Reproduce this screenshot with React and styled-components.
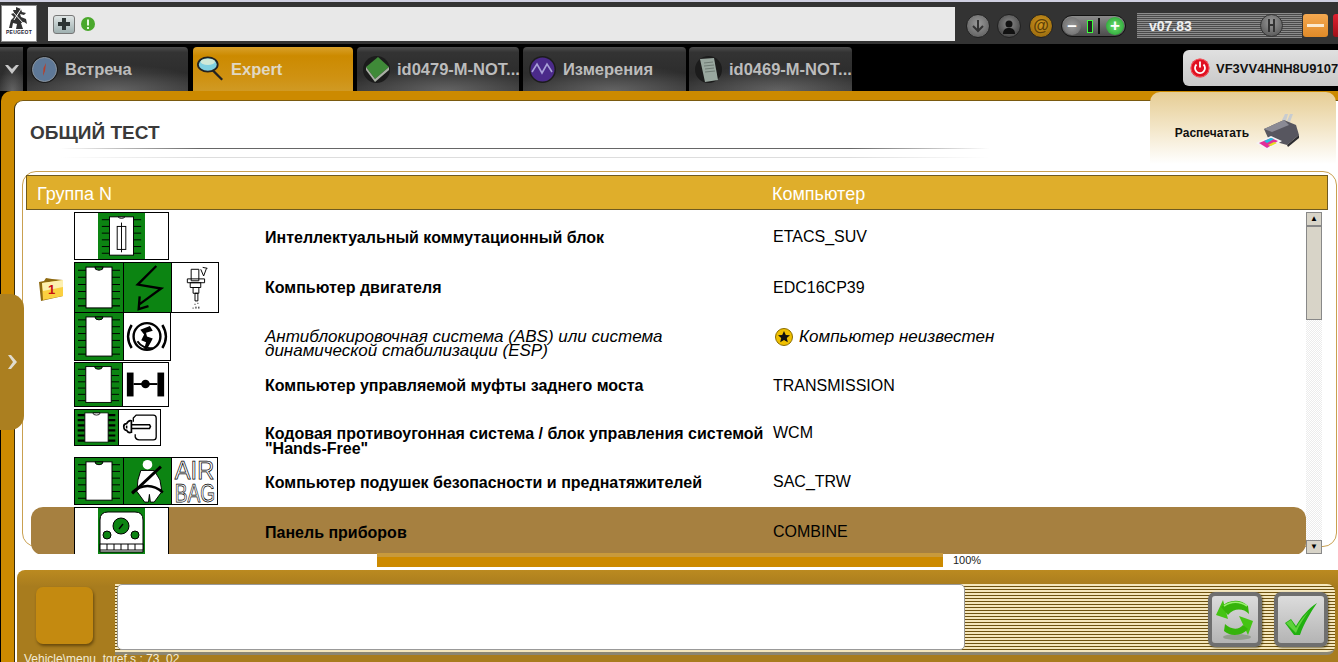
import React from 'react';
import styled, { createGlobalStyle } from 'styled-components';

const GlobalStyle = createGlobalStyle`
  html, body {
    margin: 0;
    padding: 0;
    background: #000;
    overflow: hidden;
    font-family: 'Liberation Sans', Arial, sans-serif;
  }
`;

const GREEN = '#0c8412';

const Page = styled.div`
  width: 1338px;
  height: 662px;
  overflow: hidden;
  display: flex;
  flex-direction: column;
`;

/* top toolbar */
const TopBar = styled.div`
  height: 42px;
  flex: none;
  display: flex;
  align-items: flex-start;
  background: #333;
  border-top: 2px solid #cfcfe0;
`;

const Logo = styled.div`
  width: 34px;
  height: 35px;
  margin: 3px 0 0 1px;
  background: #fff;
  border: 1px solid #8a8a8a;
  display: flex;
  flex-direction: column;
  align-items: center;
  flex: none;
`;

const LogoText = styled.span`
  font-size: 5px;
  font-weight: bold;
  color: #223;
  line-height: 6px;
  letter-spacing: 0.2px;
`;

const AddressBar = styled.div`
  width: 907px;
  height: 34px;
  margin: 5px 0 0 11px;
  background: #e8e8e8;
  display: flex;
  align-items: center;
  gap: 6px;
  padding-left: 5px;
  box-sizing: border-box;
  flex: none;
`;

const PlusButton = styled.div`
  width: 20px;
  height: 17px;
  border-radius: 3px;
  background: linear-gradient(#dfe5e5, #9fb0b0);
  border: 1px solid #777;
  display: flex;
  align-items: center;
  justify-content: center;
`;

const RoundIcon = styled.div`
  width: 24px;
  height: 24px;
  box-sizing: border-box;
  border-radius: 50%;
  flex: none;
  margin-top: 12px;
  margin-left: ${(p) => p.$gap}px;
  background: radial-gradient(circle at 50% 40%, ${(p) => p.$from}, ${(p) => p.$to});
  border: 1px solid #222;
  display: flex;
  align-items: center;
  justify-content: center;
`;

const Zoomer = styled.div`
  width: 65px;
  height: 22px;
  margin: 13px 0 0 8px;
  border: 1px solid #111;
  border-radius: 11px;
  background: linear-gradient(#8b8b8b, #4b4b4b);
  display: flex;
  align-items: center;
  justify-content: space-between;
  padding: 0 1px;
  box-sizing: border-box;
  flex: none;
`;

const ZoomKnob = styled.div`
  width: 18px;
  height: 18px;
  border-radius: 50%;
  background: ${(p) => p.$bg};
  color: #fff;
  font-weight: bold;
  font-size: 17px;
  line-height: 17px;
  text-align: center;
`;

const ZoomLevel = styled.div`
  width: 4px;
  height: 11px;
  border: 1px solid #3cff3c;
  background: #222;
`;

const ZoomTick = styled.div`
  width: 2px;
  height: 16px;
  background: #111;
`;

const VersionBox = styled.div`
  width: 165px;
  height: 25px;
  margin: 11px 0 0 11px;
  flex: none;
  box-sizing: border-box;
  padding: 0 19px 0 12px;
  background: repeating-linear-gradient(#8c8c8c 0 1px, #4a4a4a 1px 2px);
  display: flex;
  align-items: center;
  justify-content: space-between;
  color: #f0f0f0;
  font-size: 14px;
  font-weight: bold;
`;

const Knob = styled.div`
  width: 23px;
  height: 23px;
  box-sizing: border-box;
  border-radius: 50%;
  background: radial-gradient(circle at 50% 35%, #9a9a9a, #4c4c4c);
  border: 1px solid #333;
  display: flex;
  align-items: center;
  justify-content: center;
`;

const WindowButton = styled.div`
  width: 25px;
  height: 23px;
  margin: 12px 0 0 ${(p) => p.$gap}px;
  flex: none;
  border-radius: 3px;
  background: linear-gradient(${(p) => p.$from}, ${(p) => p.$to});
  display: flex;
  align-items: center;
  justify-content: center;
`;

const Dash = styled.div`
  width: 17px;
  height: 3px;
  background: #fbe9cf;
`;

/* tab row */
const TabBar = styled.div`
  height: 47px;
  flex: none;
  background: #000;
  box-sizing: border-box;
  padding-top: 3px;
  display: flex;
  position: relative;
`;

const carbon = `
  radial-gradient(ellipse 60% 60% at 55% 100%, rgba(150,150,150,.45), transparent),
  linear-gradient(#4e4e4e, #333 12%, #2d2d2d 60%, #3a3a3a),
  #333
`;

const Chevron = styled.div`
  width: 23px;
  flex: none;
  background: ${carbon};
  display: flex;
  align-items: center;
  justify-content: center;
`;

const Tab = styled.div`
  width: ${(p) => p.$w}px;
  margin-left: ${(p) => p.$gap}px;
  flex: none;
  box-sizing: border-box;
  display: flex;
  align-items: center;
  padding-left: ${(p) => p.$pad}px;
  gap: 7px;
  border-radius: 4px 4px 0 0;
  font-size: 16.5px;
  font-weight: bold;
  color: ${(p) => (p.$active ? '#e0d8c4' : '#bcbcbc')};
  background: ${(p) => (p.$active ? 'linear-gradient(#d9a02a, #cc8a00 20%, #cf9212 70%, #d09a24)' : carbon)};
`;

const TabText = styled.span`
  white-space: nowrap;
`;

const TabBadge = styled.div`
  width: 27px;
  height: 27px;
  flex: none;
  border-radius: 50%;
  background: ${(p) => (p.$plain ? 'transparent' : '#1c1c1c')};
  display: flex;
  align-items: center;
  justify-content: center;
`;

const VinChip = styled.div`
  position: absolute;
  left: 1183px;
  top: 6px;
  width: 170px;
  height: 36px;
  box-sizing: border-box;
  padding-left: 7px;
  border-radius: 6px;
  background: linear-gradient(#e0e0e0, #c9c9c9);
  display: flex;
  align-items: center;
  gap: 6px;
  font-size: 13px;
  font-weight: bold;
  color: #111;
  white-space: nowrap;
`;

/* side handle */
const SideHandle = styled.div`
  position: absolute;
  left: -1px;
  top: 203px;
  width: 24px;
  height: 136px;
  background: #ab7f20;
  border-radius: 0 14px 14px 0;
  display: flex;
  align-items: center;
  justify-content: center;
  z-index: 2;
`;

/* main area */
const Main = styled.div`
  flex: 1;
  min-height: 0;
  background: #cc8a00;
  border-radius: 10px 0 0 0;
  margin-left: 1px;
  padding: 9px 0 0 13px;
  position: relative;
`;

const Panel = styled.div`
  height: 100%;
  background: #fff;
  border-left: 1px solid #3a2c08;
  border-top: 1px solid #7a5a10;
  border-radius: 9px 0 0 0;
  position: relative;
`;

const TitleBlock = styled.div`
  height: 70px;
  box-sizing: border-box;
  padding: 21px 0 0 15px;
`;

const Title = styled.h1`
  margin: 0;
  font-size: 19px;
  line-height: 22px;
  font-weight: bold;
  color: #3a3a3a;
`;

const Rule = styled.div`
  width: 930px;
  height: 1px;
  margin: ${(p) => p.$top}px 0 0 30px;
  background: linear-gradient(90deg, #fff, ${(p) => p.$color} 15%, ${(p) => p.$color} 85%, #fff);
`;

const PrintTab = styled.div`
  position: absolute;
  right: 2px;
  top: -9px;
  width: 186px;
  height: 72px;
  border-radius: 10px 10px 0 0;
  background: linear-gradient(#e6cd94, #f3e6c8 50%, #fff);
  display: flex;
  align-items: center;
  justify-content: center;
  gap: 7px;
  font-size: 12px;
  font-weight: bold;
  color: #111;
  box-sizing: border-box;
  padding: 10px 11px 0 0;
`;

const Frame = styled.div`
  width: 1315px;
  height: 376px;
  margin-left: 7px;
  box-sizing: border-box;
  border: 1px solid #c9a050;
  border-radius: 14px;
  padding: 3px;
`;

const Header = styled.div`
  width: 1302px;
  height: 35px;
  box-sizing: border-box;
  background: #dfae2b;
  border: 1px solid #6f5a20;
  display: grid;
  grid-template-columns: 735px 1fr;
  align-items: center;
  padding: 3px 0 0 10px;
  color: #fff;
  font-size: 18px;
`;

const ListBody = styled.div`
  height: 342px;
  margin-top: 2px;
  display: flex;
  overflow: hidden;
`;

const Rows = styled.div`
  width: 1275px;
  margin-left: 5px;
  flex: none;
`;

const Row = styled.div`
  height: ${(p) => p.$h}px;
  display: grid;
  grid-template-columns: 43px 191px 508px 1fr;
  background: ${(p) => (p.$selected ? '#a68040' : 'transparent')};
  border-radius: ${(p) => (p.$selected ? '12px' : '0')};
  color: #000;
`;

const FolderCell = styled.div`
  padding: 14px 0 0 7px;
`;

const NameText = styled.div`
  align-self: center;
  line-height: ${(p) => (p.$italic ? '14px' : '15px')};
  padding-top: ${(p) => p.$drop || 0}px;
  font-size: ${(p) => (p.$italic ? '17px' : '16px')};
  font-weight: ${(p) => (p.$italic ? 'normal' : 'bold')};
  font-style: ${(p) => (p.$italic ? 'italic' : 'normal')};
`;

const ComputerText = styled.div`
  align-self: center;
  line-height: 14px;
  font-size: ${(p) => (p.$italic ? '17px' : '16px')};
  font-style: ${(p) => (p.$italic ? 'italic' : 'normal')};
  display: flex;
  align-items: center;
  gap: 6px;
  padding-left: ${(p) => (p.$italic ? '2px' : '0')};
`;

const IconStrip = styled.div`
  display: inline-flex;
  align-self: start;
  justify-self: start;
  height: ${(p) => p.$h}px;
  box-sizing: border-box;
  border: 1px solid #000;
  background: #fff;
`;

const Cell = styled.div`
  width: ${(p) => p.$w}px;
  height: 100%;
  flex: none;
  box-sizing: border-box;
  background: ${(p) => (p.$green ? GREEN : '#fff')};
  border-left: ${(p) => (p.$line ? '1px solid #000' : 'none')};
  & > svg {
    display: block;
    width: 100%;
    height: 100%;
  }
`;

const Scrollbar = styled.div`
  width: 16px;
  flex: none;
  background: repeating-conic-gradient(#ececec 0 25%, #fff 0 50%) 0 0 / 2px 2px;
  display: flex;
  flex-direction: column;
  justify-content: space-between;
  position: relative;
`;

const ScrollButton = styled.div`
  height: 14px;
  background: #d8d4c8;
  border: 1px solid #888;
  box-sizing: border-box;
  color: #000;
  font-size: 8px;
  line-height: 12px;
  text-align: center;
`;

const ScrollThumb = styled.div`
  position: absolute;
  top: 14px;
  left: 0;
  right: 0;
  height: 94px;
  background: #d8d4c8;
  border: 1px solid #888;
  box-sizing: border-box;
`;

const Progress = styled.div`
  margin: 6px 0 0 362px;
  display: flex;
  align-items: center;
  gap: 10px;
  height: 14px;
  font-size: 11px;
  color: #222;
`;

const ProgressBar = styled.div`
  width: 566px;
  height: 14px;
  background: linear-gradient(#c89a3c 0 4px, #cc8a00 4px);
`;

/* bottom bar */
const BottomBar = styled.div`
  height: 92px;
  margin: 3px 0 0 2px;
  box-sizing: border-box;
  padding-top: 14px;
  background: linear-gradient(#bb8a20, #a87c1e 18%);
  border-radius: 8px 0 0 0;
  overflow: hidden;
`;

const BottomRow = styled.div`
  display: flex;
  padding-left: 19px;
  gap: 22px;
`;

const StatusSquare = styled.div`
  width: 57px;
  height: 57px;
  margin-top: 3px;
  flex: none;
  border-radius: 7px;
  background: #c48a10;
  box-shadow: 1px 2px 3px rgba(60, 40, 0, 0.6);
`;

const Stripes = styled.div`
  width: 1220px;
  height: 71px;
  flex: none;
  box-sizing: border-box;
  padding-left: 2px;
  border-bottom: 3px solid #8c8774;
  border-radius: 0 8px 8px 0;
  background: repeating-linear-gradient(#f5e7bd 0 2px, #6e5210 2px 3px);
  display: flex;
`;

const MessageBox = styled.div`
  width: 848px;
  height: 66px;
  flex: none;
  background: #fff;
  border: 1px solid #999;
  box-sizing: border-box;
  border-radius: 5px;
`;

const ActionButtons = styled.div`
  margin-left: auto;
  padding: 8px 7px 0 0;
  display: flex;
  gap: 12px;
`;

const ActionButton = styled.div`
  width: 54px;
  height: 55px;
  box-sizing: border-box;
  border: 4px solid #6f6f6f;
  border-radius: 7px;
  background: linear-gradient(#dcdcdc, #c8c8c8 50%, #b4b4b4);
  box-shadow: 1px 1px 2px rgba(50, 40, 0, 0.6);
  display: flex;
  align-items: center;
  justify-content: center;
`;

const FileLabel = styled.div`
  margin: -3px 0 0 7px;
  color: #f3ecd8;
  font-size: 12px;
  line-height: 14px;
  white-space: nowrap;
`;

/* icons */
const LionIcon = () => (
  <svg width="24" height="23" viewBox="0 0 24 23">
    <path d="M9 1l5 2 1 3 4 1-2 2-4-1 1 3 5 2 1 5-3-2-3 1 2 6H9l1-5-4-1-1 5-3 0 2-8 3-3-3-3 3-1-1-3 3 0z" fill="#333" />
    <path d="M5 5l12 13M14 3L7 14" stroke="#fff" strokeWidth="1" />
  </svg>
);

const TabCompass = () => (
  <svg width="25" height="25" viewBox="0 0 25 25">
    <circle cx="12.5" cy="12.5" r="12" fill="#5e7897" stroke="#8a949e" />
    <path d="M14 6l-1 8-2 5 .5-8z" fill="#b4402c" />
  </svg>
);

const TabLens = () => (
  <svg width="30" height="32" viewBox="0 0 30 32">
    <path d="M17 17l11 11" stroke="#222" strokeWidth="2.5" />
    <ellipse cx="12" cy="11" rx="11" ry="8" fill="#7fd0e0" stroke="#222" strokeWidth="2" />
    <ellipse cx="12" cy="8" rx="8" ry="3.5" fill="#cfe9d8" />
  </svg>
);

const TabBook = () => (
  <svg width="27" height="27" viewBox="0 0 27 27">
    <path d="M3 11L15 1l11 10-14 12z" fill="#3f8a38" />
    <path d="M3 11l9 12 14-12v3L12 26 3 14z" fill="#a9b0a4" />
  </svg>
);

const TabWave = () => (
  <svg width="25" height="25" viewBox="0 0 25 25">
    <circle cx="12.5" cy="12.5" r="12" fill="#4b2a8a" />
    <path d="M2 15l5-8 5 9 5-9 5 8" fill="none" stroke="#a9a0d8" strokeWidth="1.6" />
  </svg>
);

const TabDoc = () => (
  <svg width="25" height="27" viewBox="0 0 25 27">
    <path d="M4 3l14-1 4 22-13 2z" fill="#99a79f" />
    <path d="M8 7l9-1M8 10l10-1M9 13l9-1M9 16l10-1" stroke="#6f7b74" />
  </svg>
);

const PowerIcon = () => (
  <svg width="20" height="20" viewBox="0 0 20 20">
    <circle cx="10" cy="10" r="9.5" fill="#e01020" />
    <circle cx="10" cy="10" r="9" fill="none" stroke="#ff8a8a" strokeWidth="0.6" />
    <path d="M6.5 6.5a5 5 0 1 0 7 0" fill="none" stroke="#fff" strokeWidth="1.8" />
    <path d="M10 3.5v6" stroke="#fff" strokeWidth="1.8" />
  </svg>
);

const Printer = () => (
  <svg width="44" height="38" viewBox="0 0 44 38">
    <path d="M26 6l3-6h3l-2 7zM31 7l3-7h3l-3 8z" fill="#c8ccd0" />
    <path d="M8 15l20-9 12 5 3 10-12 10-18-5z" fill="#57565f" />
    <path d="M8 15l20-9 5 5-17 7z" fill="#8a8a94" />
    <path d="M31 31l12-10v3L32 33z" fill="#2c2c30" />
    <path d="M0 29l15-7 11 5-15 9z" fill="#f4f4f4" />
    <path d="M3 29l12-5 7 3-11 7z" fill="#e0309a" />
    <path d="M8 27l7-3 3 1-7 4z" fill="#22c0e0" />
    <path d="M12 31l6-3 3 1-6 3z" fill="#e8e020" />
  </svg>
);

const FolderOne = () => (
  <svg width="26" height="25" viewBox="0 0 26 25">
    <path d="M1 6l5-1 2-3 6 1 11 1v16L3 25z" fill="#8f6a10" />
    <path d="M4 7l21-3v16L5 24z" fill="#fbd040" />
    <path d="M4 7l21-3v7L5 15z" fill="#fdf0b0" />
    <text x="10" y="18" fontSize="13" fontWeight="bold" fill="#c81010" fontFamily="Liberation Sans">1</text>
  </svg>
);

const StarBadge = () => (
  <svg width="18" height="19" viewBox="0 0 18 19">
    <circle cx="9" cy="9" r="8.5" fill="#f0c000" stroke="#8a6c00" />
    <path d="M9 3l1.8 4 4.2.3-3.2 2.8 1 4.2L9 12.1l-3.8 2.2 1-4.2L3 7.3l4.2-.3z" fill="#111" />
  </svg>
);

const RefreshIcon = () => (
  <svg width="40" height="44" viewBox="0 0 40 44">
    <ellipse cx="22" cy="39" rx="14" ry="3" fill="#7a8a70" opacity="0.6" />
    <path d="M8 2L1 17l12 4z" fill="#45c414" />
    <path d="M6 9c8-8 20-8 27-1l1 8c-6-6-15-6-21 1z" fill="#36b40a" />
    <path d="M9 8c7-5 16-5 23 0" fill="none" stroke="#9af070" strokeWidth="1.6" />
    <path d="M24 18l14 5-5 14z" fill="#45c414" />
    <path d="M33 31c-6 7-17 8-24 2l1-7c6 6 14 6 18 1z" fill="#36b40a" />
  </svg>
);

const CheckIcon = () => (
  <svg width="36" height="36" viewBox="0 0 36 36">
    <path d="M2 21l6-4 5 7C18 15 25 7 34 1c-6 9-13 20-17 32h-6z" fill="#20b010" />
    <path d="M3 21l5-3 5 8c3-6 8-12 13-17-5 7-10 14-13 22z" fill="#7ae050" opacity="0.7" />
  </svg>
);

/* diagnostic pictograms */
const pinRows = [8, 15, 22, 29, 36, 43];

const Chip = ({ thick }) => (
  <svg viewBox="0 0 48 48" preserveAspectRatio="none">
    {pinRows.map((y) => (
      <path key={y} d={`M3 ${y - 1}h8M37 ${y - 1}h8`} stroke="#000" strokeWidth={thick ? 3 : 1} />
    ))}
    <rect x="11" y="4" width="26" height="40" fill="#fff" stroke="#000" />
    <path d="M20 4a4 3 0 0 0 8 0z" fill={thick ? '#fff' : GREEN} stroke="#000" />
  </svg>
);

const FuseChip = () => (
  <svg viewBox="0 0 47 48">
    {pinRows.map((y) => (
      <path key={y} d={`M3 ${y - 1}h8M36 ${y - 1}h8`} stroke="#000" />
    ))}
    <rect x="11" y="4" width="25" height="40" fill="#fff" stroke="#000" />
    <path d="M20 4a4 3 0 0 0 7 0z" fill="#fff" stroke="#000" />
    <rect x="19" y="14" width="9" height="24" fill="#fff" stroke="#000" />
    <path d="M23.5 10v31" stroke="#000" />
  </svg>
);

const DashChip = () => (
  <svg viewBox="0 0 47 48">
    <path d="M2 44V12q0-8 8-8h27q8 0 8 8v32z" fill="#fff" stroke="#000" />
    <circle cx="23" cy="18" r="8" fill={GREEN} stroke="#000" />
    <path d="M21 21l4-5" stroke="#000" strokeWidth="1.4" />
    <circle cx="9" cy="27" r="4" fill={GREEN} stroke="#000" />
    <circle cx="37" cy="27" r="4" fill={GREEN} stroke="#000" />
    <path d="M2 36h43v6H2zM9 36v6M16 36v6M23 36v6M30 36v6M37 36v6" fill="#fff" stroke="#000" />
  </svg>
);

const Bolt = () => (
  <svg viewBox="0 0 48 48">
    <path d="M33 2L14 21l24 4-22 16M16 33l-1 13 10-3" fill="none" stroke="#000" strokeWidth="2.4" />
  </svg>
);

const Injector = () => (
  <svg viewBox="0 0 48 48">
    <path d="M20 5h8v12h-8zM16 15h18v4H16zM19 19h11v5H19zM22 24h6v6h-6zM24 30h3v8h-3z" fill="#fff" stroke="#000" />
    <path d="M30 5l3 7 3-8M32 3l5 1" fill="none" stroke="#000" />
    <path d="M24 41v1M27 40v1M22 45v1M25 44v2M28 44v2" stroke="#000" />
  </svg>
);

const AbsSymbol = () => (
  <svg viewBox="0 0 48 48">
    <circle cx="24" cy="24" r="14" fill="none" stroke="#000" strokeWidth="2.5" />
    <path d="M8 12c-5 8-5 16 0 24M40 12c5 8 5 16 0 24" fill="none" stroke="#000" strokeWidth="2.5" />
    <path d="M17 17l10-4 3 5-7 2 1 4 6 2-2 4-4 7h-3l2-7-5-2 3-6z" fill="#000" />
    <path d="M14 29c3 5 10 8 16 7" fill="none" stroke="#000" strokeWidth="2" />
  </svg>
);

const Axle = () => (
  <svg viewBox="0 0 47 45">
    <rect x="4" y="10" width="7" height="25" fill="#000" />
    <rect x="36" y="10" width="7" height="25" fill="#000" />
    <path d="M11 22h25" stroke="#000" strokeWidth="2" />
    <circle cx="23.5" cy="22" r="4.5" fill="#000" />
  </svg>
);

const KeySymbol = () => (
  <svg viewBox="0 0 43 36">
    <path d="M15 12V8l3-3h18q3 0 3 3v20q0 3-3 3H21q-3 0-4-3v-3" fill="none" stroke="#000" strokeWidth="1.4" />
    <path d="M13 15h19l1 2-1 2H13" fill="#fff" stroke="#000" strokeWidth="1.6" />
    <path d="M13 11c-3-1-4 1-5 3-1 0-3 0-3 3s2 4 3 4c1 2 2 3 5 2z" fill="#fff" stroke="#000" strokeWidth="1.8" />
    <path d="M8 16v3" stroke="#000" strokeWidth="1.6" />
  </svg>
);

const Belt = () => (
  <svg viewBox="0 0 48 48">
    <circle cx="24" cy="7" r="5" fill="#fff" />
    <path d="M17 13h14l6 10 2 12-8 11h-4l-1-8-1 8h-4l-8-11 1-12z" fill="#fff" stroke="#000" />
    <path d="M38 9L8 37" stroke="#000" strokeWidth="3" />
    <path d="M8 36c10-9 22-9 32 0" fill="none" stroke="#000" strokeWidth="2.5" />
  </svg>
);

const AirBag = () => (
  <svg viewBox="0 0 48 48">
    <text x="3" y="22" fontSize="28" fontFamily="Liberation Sans" fill="#fff" stroke="#000" strokeWidth="0.8" textLength="42" lengthAdjust="spacingAndGlyphs">AIR</text>
    <text x="3" y="46" fontSize="28" fontFamily="Liberation Sans" fill="#fff" stroke="#000" strokeWidth="0.8" textLength="43" lengthAdjust="spacingAndGlyphs">BAG</text>
  </svg>
);

const rows = [
  {
    h: 50, stripH: 48,
    cells: [{ w: 23 }, { w: 47, green: true, draw: <FuseChip /> }, { w: 23 }],
    name: 'Интеллектуальный коммутационный блок', computer: 'ETACS_SUV',
  },
  {
    h: 50, stripH: 51, folder: true,
    cells: [{ w: 48, green: true, draw: <Chip /> }, { w: 48, green: true, line: true, draw: <Bolt /> }, { w: 47, line: true, draw: <Injector /> }],
    name: 'Компьютер двигателя', computer: 'EDC16CP39',
  },
  {
    h: 50, stripH: 49, drop: 14,
    cells: [{ w: 48, green: true, draw: <Chip /> }, { w: 47, line: true, draw: <AbsSymbol /> }],
    name: 'Антиблокировочная система (ABS) или система динамической стабилизации (ESP)',
    italic: true, computer: 'Компьютер неизвестен', star: true,
  },
  {
    h: 47, stripH: 45,
    cells: [{ w: 47, green: true, draw: <Chip /> }, { w: 46, line: true, draw: <Axle /> }],
    name: 'Компьютер управляемой муфты заднего моста', computer: 'TRANSMISSION',
  },
  {
    h: 48, stripH: 37, drop: 15,
    cells: [{ w: 43, green: true, draw: <Chip thick /> }, { w: 42, line: true, draw: <KeySymbol /> }],
    name: 'Кодовая противоугонная система / блок управления системой "Hands-Free"', computer: 'WCM',
  },
  {
    h: 50, stripH: 48,
    cells: [{ w: 48, green: true, draw: <Chip /> }, { w: 48, green: true, line: true, draw: <Belt /> }, { w: 46, line: true, draw: <AirBag /> }],
    name: 'Компьютер подушек безопасности и преднатяжителей', computer: 'SAC_TRW',
  },
  {
    h: 48, stripH: 50, selected: true,
    cells: [{ w: 23 }, { w: 47, green: true, draw: <DashChip /> }, { w: 23 }],
    name: 'Панель приборов', computer: 'COMBINE',
  },
];

const tabs = [
  { label: 'Встреча', w: 161, gap: 4, pad: 4, icon: <TabCompass /> },
  { label: 'Expert', w: 160, gap: 5, pad: 4, icon: <TabLens />, active: true },
  { label: 'id0479-M-NOT...', w: 162, gap: 4, pad: 6, icon: <TabBook /> },
  { label: 'Измерения', w: 163, gap: 4, pad: 6, icon: <TabWave /> },
  { label: 'id0469-M-NOT...', w: 163, gap: 3, pad: 6, icon: <TabDoc /> },
];

const App = () => (
  <Page>
    <GlobalStyle />
    <TopBar>
      <Logo>
        <LionIcon />
        <LogoText>PEUGEOT</LogoText>
      </Logo>
      <AddressBar>
        <PlusButton>
          <svg width="12" height="12" viewBox="0 0 12 12">
            <path d="M4 0h4v4h4v4H8v4H4V8H0V4h4z" fill="#2c3434" />
          </svg>
        </PlusButton>
        <svg width="14" height="14" viewBox="0 0 14 14">
          <circle cx="7" cy="7" r="7" fill="#4aa82c" />
          <path d="M7 2.5v6M7 10v2" stroke="#e8f8e0" strokeWidth="2" />
        </svg>
      </AddressBar>
      <RoundIcon $gap={11} $from="#9a9a9a" $to="#555">
        <svg width="14" height="14" viewBox="0 0 14 14">
          <path d="M7 1v11M2 7l5 5 5-5" fill="none" stroke="#333" strokeWidth="2" />
        </svg>
      </RoundIcon>
      <RoundIcon $gap={7} $from="#8a8a8a" $to="#333">
        <svg width="16" height="16" viewBox="0 0 16 16">
          <circle cx="8" cy="6" r="3.5" fill="#111" />
          <path d="M2 16c0-5 3-6 6-6s6 1 6 6z" fill="#111" />
        </svg>
      </RoundIcon>
      <RoundIcon $gap={8} $from="#d59a20" $to="#8a5f0a">
        <svg width="18" height="18" viewBox="0 0 18 18">
          <text x="9" y="14" textAnchor="middle" fontSize="16" fontWeight="bold" fontFamily="Liberation Sans" fill="#5c3f08">@</text>
        </svg>
      </RoundIcon>
      <Zoomer>
        <ZoomKnob $bg="radial-gradient(#999, #666)">–</ZoomKnob>
        <ZoomLevel />
        <ZoomTick />
        <ZoomKnob $bg="radial-gradient(#6fe06f, #1c9a2c)">+</ZoomKnob>
      </Zoomer>
      <VersionBox>
        v07.83
        <Knob>
          <svg width="11" height="15" viewBox="0 0 11 15">
            <path d="M3 1v13M8 1v13M3 7h5" stroke="#333" strokeWidth="2" />
          </svg>
        </Knob>
      </VersionBox>
      <WindowButton $gap={1} $from="#f4a850" $to="#e08a28"><Dash /></WindowButton>
      <WindowButton $gap={5} $from="#e02030" $to="#a01018" />
    </TopBar>
    <TabBar>
      <Chevron>
        <svg width="14" height="10" viewBox="0 0 14 10">
          <path d="M0 1h3l4 4 4-4h3L7 10z" fill="#c8c8c8" />
        </svg>
      </Chevron>
      {tabs.map((t) => (
        <Tab key={t.label} $w={t.w} $gap={t.gap} $pad={t.pad} $active={t.active}>
          <TabBadge $plain={t.active}>{t.icon}</TabBadge>
          <TabText>{t.label}</TabText>
        </Tab>
      ))}
      <VinChip>
        <PowerIcon />
        VF3VV4HNH8U91077
      </VinChip>
    </TabBar>
    <Main>
      <SideHandle>
        <svg width="10" height="14" viewBox="0 0 10 14">
          <path d="M1 0h3l6 7-6 7H1l5-7z" fill="#e0dccf" />
        </svg>
      </SideHandle>
      <Panel>
        <PrintTab>
          Распечатать
          <Printer />
        </PrintTab>
        <TitleBlock>
          <Title>ОБЩИЙ ТЕСТ</Title>
          <Rule $top={4} $color="#666" />
          <Rule $top={8} $color="#ddd" />
        </TitleBlock>
        <Frame>
          <Header>
            <span>Группа N</span>
            <span>Компьютер</span>
          </Header>
          <ListBody>
            <Rows>
              {rows.map((r) => (
                <Row key={r.name} $h={r.h} $selected={r.selected}>
                  <FolderCell>{r.folder && <FolderOne />}</FolderCell>
                  <IconStrip $h={r.stripH}>
                    {r.cells.map((c, i) => (
                      <Cell key={i} $w={c.w} $green={c.green} $line={c.line}>
                        {c.draw}
                      </Cell>
                    ))}
                  </IconStrip>
                  <NameText $italic={r.italic} $drop={r.drop}>{r.name}</NameText>
                  <ComputerText $italic={r.italic}>
                    {r.star && <StarBadge />}
                    <span>{r.computer}</span>
                  </ComputerText>
                </Row>
              ))}
            </Rows>
            <Scrollbar>
              <ScrollButton>▲</ScrollButton>
              <ScrollThumb />
              <ScrollButton>▼</ScrollButton>
            </Scrollbar>
          </ListBody>
        </Frame>
        <Progress>
          <ProgressBar />
          100%
        </Progress>
        <BottomBar>
          <BottomRow>
            <StatusSquare />
            <Stripes>
              <MessageBox />
              <ActionButtons>
                <ActionButton><RefreshIcon /></ActionButton>
                <ActionButton><CheckIcon /></ActionButton>
              </ActionButtons>
            </Stripes>
          </BottomRow>
          <FileLabel>Vehicle\menu_tgref.s : 73_02</FileLabel>
        </BottomBar>
      </Panel>
    </Main>
  </Page>
);

export default App;
